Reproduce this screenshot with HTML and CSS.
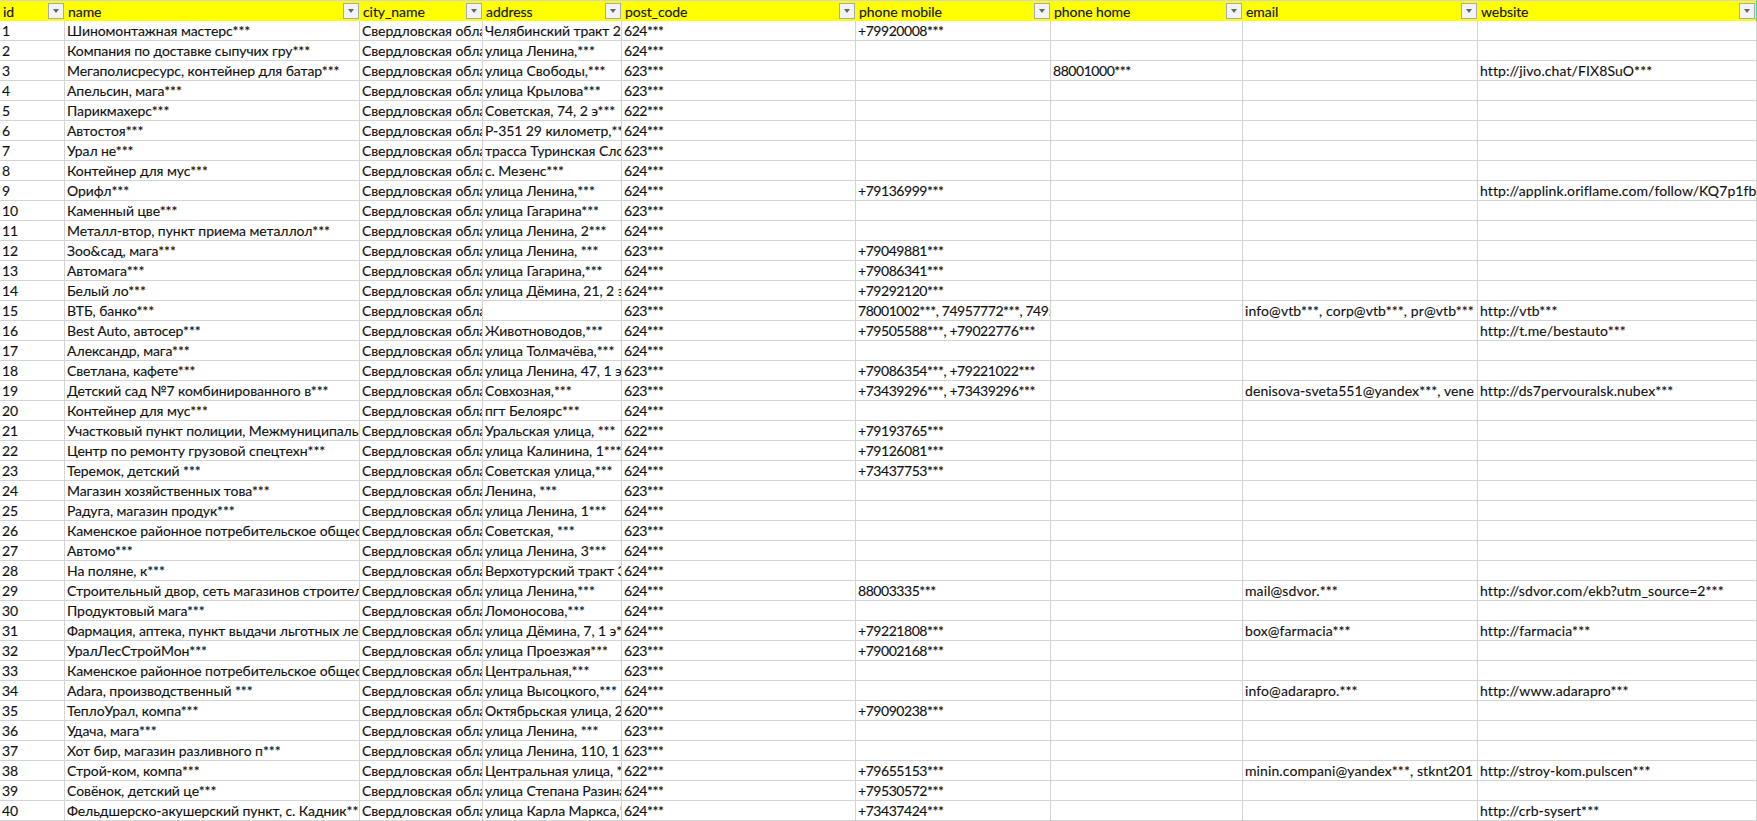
FILE: index.html
```html
<!DOCTYPE html>
<html lang="ru">
<head>
<meta charset="utf-8">
<title>Таблица</title>
<link rel="stylesheet" href="styles.css">
</head>
<body>
<table class="sheet">
<colgroup>
<col class="c-id"><col class="c-name"><col class="c-city"><col class="c-addr"><col class="c-post"><col class="c-mob"><col class="c-home"><col class="c-mail"><col class="c-web">
</colgroup>
<thead>
<tr>
<th><div class="hd"><span>id</span><button class="flt"></button></div></th>
<th><div class="hd"><span>name</span><button class="flt"></button></div></th>
<th><div class="hd"><span>city_name</span><button class="flt"></button></div></th>
<th><div class="hd"><span>address</span><button class="flt"></button></div></th>
<th><div class="hd"><span>post_code</span><button class="flt"></button></div></th>
<th><div class="hd"><span>phone mobile</span><button class="flt"></button></div></th>
<th><div class="hd"><span>phone home</span><button class="flt"></button></div></th>
<th><div class="hd"><span>email</span><button class="flt"></button></div></th>
<th><div class="hd"><span>website</span><button class="flt"></button></div></th>
</tr>
</thead>
<tbody>
<tr><td>1</td><td>Шиномонтажная мастерс***</td><td>Свердловская область</td><td>Челябинский тракт 28</td><td>624***</td><td>+79920008***</td><td></td><td></td><td></td></tr>
<tr><td>2</td><td>Компания по доставке сыпучих гру***</td><td>Свердловская область</td><td>улица Ленина,***</td><td>624***</td><td></td><td></td><td></td><td></td></tr>
<tr><td>3</td><td>Мегаполисресурс, контейнер для батар***</td><td>Свердловская область</td><td>улица Свободы,***</td><td>623***</td><td></td><td>88001000***</td><td></td><td>http://jivo.chat/FIX8SuO***</td></tr>
<tr><td>4</td><td>Апельсин, мага***</td><td>Свердловская область</td><td>улица Крылова***</td><td>623***</td><td></td><td></td><td></td><td></td></tr>
<tr><td>5</td><td>Парикмахерс***</td><td>Свердловская область</td><td>Советская, 74, 2 э***</td><td>622***</td><td></td><td></td><td></td><td></td></tr>
<tr><td>6</td><td>Автостоя***</td><td>Свердловская область</td><td>Р-351 29 километр,***</td><td>624***</td><td></td><td></td><td></td><td></td></tr>
<tr><td>7</td><td>Урал не***</td><td>Свердловская область</td><td>трасса Туринская Слобода</td><td>623***</td><td></td><td></td><td></td><td></td></tr>
<tr><td>8</td><td>Контейнер для мус***</td><td>Свердловская область</td><td>с. Мезенс***</td><td>624***</td><td></td><td></td><td></td><td></td></tr>
<tr><td>9</td><td>Орифл***</td><td>Свердловская область</td><td>улица Ленина,***</td><td>624***</td><td>+79136999***</td><td></td><td></td><td>http://applink.oriflame.com/follow/KQ7p1fb</td></tr>
<tr><td>10</td><td>Каменный цве***</td><td>Свердловская область</td><td>улица Гагарина***</td><td>623***</td><td></td><td></td><td></td><td></td></tr>
<tr><td>11</td><td>Металл-втор, пункт приема металлол***</td><td>Свердловская область</td><td>улица Ленина, 2***</td><td>624***</td><td></td><td></td><td></td><td></td></tr>
<tr><td>12</td><td>Зоо&amp;сад, мага***</td><td>Свердловская область</td><td>улица Ленина, ***</td><td>623***</td><td>+79049881***</td><td></td><td></td><td></td></tr>
<tr><td>13</td><td>Автомага***</td><td>Свердловская область</td><td>улица Гагарина,***</td><td>624***</td><td>+79086341***</td><td></td><td></td><td></td></tr>
<tr><td>14</td><td>Белый ло***</td><td>Свердловская область</td><td>улица Дёмина, 21, 2 эт</td><td>624***</td><td>+79292120***</td><td></td><td></td><td></td></tr>
<tr><td>15</td><td>ВТБ, банко***</td><td>Свердловская область</td><td></td><td>623***</td><td>78001002***, 74957772***, 7495</td><td></td><td>info@vtb***, corp@vtb***, pr@vtb***</td><td>http://vtb***</td></tr>
<tr><td>16</td><td>Best Auto, автосер***</td><td>Свердловская область</td><td>Животноводов,***</td><td>624***</td><td>+79505588***, +79022776***</td><td></td><td></td><td>http://t.me/bestauto***</td></tr>
<tr><td>17</td><td>Александр, мага***</td><td>Свердловская область</td><td>улица Толмачёва,***</td><td>624***</td><td></td><td></td><td></td><td></td></tr>
<tr><td>18</td><td>Светлана, кафете***</td><td>Свердловская область</td><td>улица Ленина, 47, 1 эт</td><td>623***</td><td>+79086354***, +79221022***</td><td></td><td></td><td></td></tr>
<tr><td>19</td><td>Детский сад №7 комбинированного в***</td><td>Свердловская область</td><td>Совхозная,***</td><td>623***</td><td>+73439296***, +73439296***</td><td></td><td>denisova-sveta551@yandex***, vene</td><td>http://ds7pervouralsk.nubex***</td></tr>
<tr><td>20</td><td>Контейнер для мус***</td><td>Свердловская область</td><td>пгт Белоярс***</td><td>624***</td><td></td><td></td><td></td><td></td></tr>
<tr><td>21</td><td>Участковый пункт полиции, Межмуниципальный</td><td>Свердловская область</td><td>Уральская улица, ***</td><td>622***</td><td>+79193765***</td><td></td><td></td><td></td></tr>
<tr><td>22</td><td>Центр по ремонту грузовой спецтехн***</td><td>Свердловская область</td><td>улица Калинина, 1***</td><td>624***</td><td>+79126081***</td><td></td><td></td><td></td></tr>
<tr><td>23</td><td>Теремок, детский ***</td><td>Свердловская область</td><td>Советская улица,***</td><td>624***</td><td>+73437753***</td><td></td><td></td><td></td></tr>
<tr><td>24</td><td>Магазин хозяйственных това***</td><td>Свердловская область</td><td>Ленина, ***</td><td>623***</td><td></td><td></td><td></td><td></td></tr>
<tr><td>25</td><td>Радуга, магазин продук***</td><td>Свердловская область</td><td>улица Ленина, 1***</td><td>624***</td><td></td><td></td><td></td><td></td></tr>
<tr><td>26</td><td>Каменское районное потребительское общество</td><td>Свердловская область</td><td>Советская, ***</td><td>623***</td><td></td><td></td><td></td><td></td></tr>
<tr><td>27</td><td>Автомо***</td><td>Свердловская область</td><td>улица Ленина, 3***</td><td>624***</td><td></td><td></td><td></td><td></td></tr>
<tr><td>28</td><td>На поляне, к***</td><td>Свердловская область</td><td>Верхотурский тракт 3</td><td>624***</td><td></td><td></td><td></td><td></td></tr>
<tr><td>29</td><td>Строительный двор, сеть магазинов строительных</td><td>Свердловская область</td><td>улица Ленина,***</td><td>624***</td><td>88003335***</td><td></td><td>mail@sdvor.***</td><td>http://sdvor.com/ekb?utm_source=2***</td></tr>
<tr><td>30</td><td>Продуктовый мага***</td><td>Свердловская область</td><td>Ломоносова,***</td><td>624***</td><td></td><td></td><td></td><td></td></tr>
<tr><td>31</td><td>Фармация, аптека, пункт выдачи льготных лекарств</td><td>Свердловская область</td><td>улица Дёмина, 7, 1 э***</td><td>624***</td><td>+79221808***</td><td></td><td>box@farmacia***</td><td>http://farmacia***</td></tr>
<tr><td>32</td><td>УралЛесСтройМон***</td><td>Свердловская область</td><td>улица Проезжая***</td><td>623***</td><td>+79002168***</td><td></td><td></td><td></td></tr>
<tr><td>33</td><td>Каменское районное потребительское общество</td><td>Свердловская область</td><td>Центральная,***</td><td>623***</td><td></td><td></td><td></td><td></td></tr>
<tr><td>34</td><td>Adara, производственный ***</td><td>Свердловская область</td><td>улица Высоцкого,***</td><td>624***</td><td></td><td></td><td>info@adarapro.***</td><td>http://www.adarapro***</td></tr>
<tr><td>35</td><td>ТеплоУрал, компа***</td><td>Свердловская область</td><td>Октябрьская улица, 2</td><td>620***</td><td>+79090238***</td><td></td><td></td><td></td></tr>
<tr><td>36</td><td>Удача, мага***</td><td>Свердловская область</td><td>улица Ленина, ***</td><td>623***</td><td></td><td></td><td></td><td></td></tr>
<tr><td>37</td><td>Хот бир, магазин разливного п***</td><td>Свердловская область</td><td>улица Ленина, 110, 1 эт</td><td>623***</td><td></td><td></td><td></td><td></td></tr>
<tr><td>38</td><td>Строй-ком, компа***</td><td>Свердловская область</td><td>Центральная улица, ***</td><td>622***</td><td>+79655153***</td><td></td><td>minin.compani@yandex***, stknt201</td><td>http://stroy-kom.pulscen***</td></tr>
<tr><td>39</td><td>Совёнок, детский це***</td><td>Свердловская область</td><td>улица Степана Разина,</td><td>624***</td><td>+79530572***</td><td></td><td></td><td></td></tr>
<tr><td>40</td><td>Фельдшерско-акушерский пункт, с. Кадник***</td><td>Свердловская область</td><td>улица Карла Маркса,***</td><td>624***</td><td>+73437424***</td><td></td><td></td><td>http://crb-sysert***</td></tr>
</tbody>
</table>
</body>
</html>
```

FILE: styles.css
```css
html, body {
  margin: 0;
  padding: 0;
  background: #fff;
  overflow: hidden;
}
.sheet {
  border-collapse: separate;
  border-spacing: 0;
  table-layout: fixed;
  width: 1757px;
  font-family: "Lato", "Open Sans", sans-serif;
  font-size: 14px;
  letter-spacing: -0.07px;
  color: #111;
  -webkit-text-stroke: 0.12px #111;
}
.c-id { width: 65px; }
.c-name { width: 295px; }
.c-city { width: 123px; }
.c-addr { width: 139px; }
.c-post { width: 234px; }
.c-mob { width: 195px; }
.c-home { width: 192px; }
.c-mail { width: 235px; }
.c-web { width: 279px; }
th, td {
  box-sizing: border-box;
  padding: 0;
  overflow: hidden;
  white-space: nowrap;
  text-align: left;
  font-weight: 400;
}
th {
  height: 21px;
  background: #ffff00;
  border-top: 1px solid #d4d4d4;
}
th:last-child {
  border-right: 1px solid #45d884;
}
td {
  height: 20px;
  padding-left: 2px;
  padding-top: 1px;
  line-height: 18px;
  border-right: 1px solid #d4d4d4;
  border-bottom: 1px solid #d4d4d4;
  vertical-align: middle;
}
td:nth-child(5), td:nth-child(6), td:nth-child(7) {
  letter-spacing: -0.45px;
}
td:nth-child(8), td:nth-child(9) {
  letter-spacing: 0.1px;
}
.hd {
  display: flex;
  align-items: center;
  justify-content: space-between;
  height: 20px;
  padding-left: 3px;
}
.flt {
  box-sizing: border-box;
  flex: none;
  width: 16px;
  height: 16px;
  margin: 0 1px 0 0;
  padding: 0;
  border: 1px solid #a4abb8;
  background: #f1f3f6;
  position: relative;
}
.flt::after {
  content: "";
  position: absolute;
  left: 4px;
  top: 5px;
  border-left: 3px solid transparent;
  border-right: 3px solid transparent;
  border-top: 4px solid #666;
}
```
